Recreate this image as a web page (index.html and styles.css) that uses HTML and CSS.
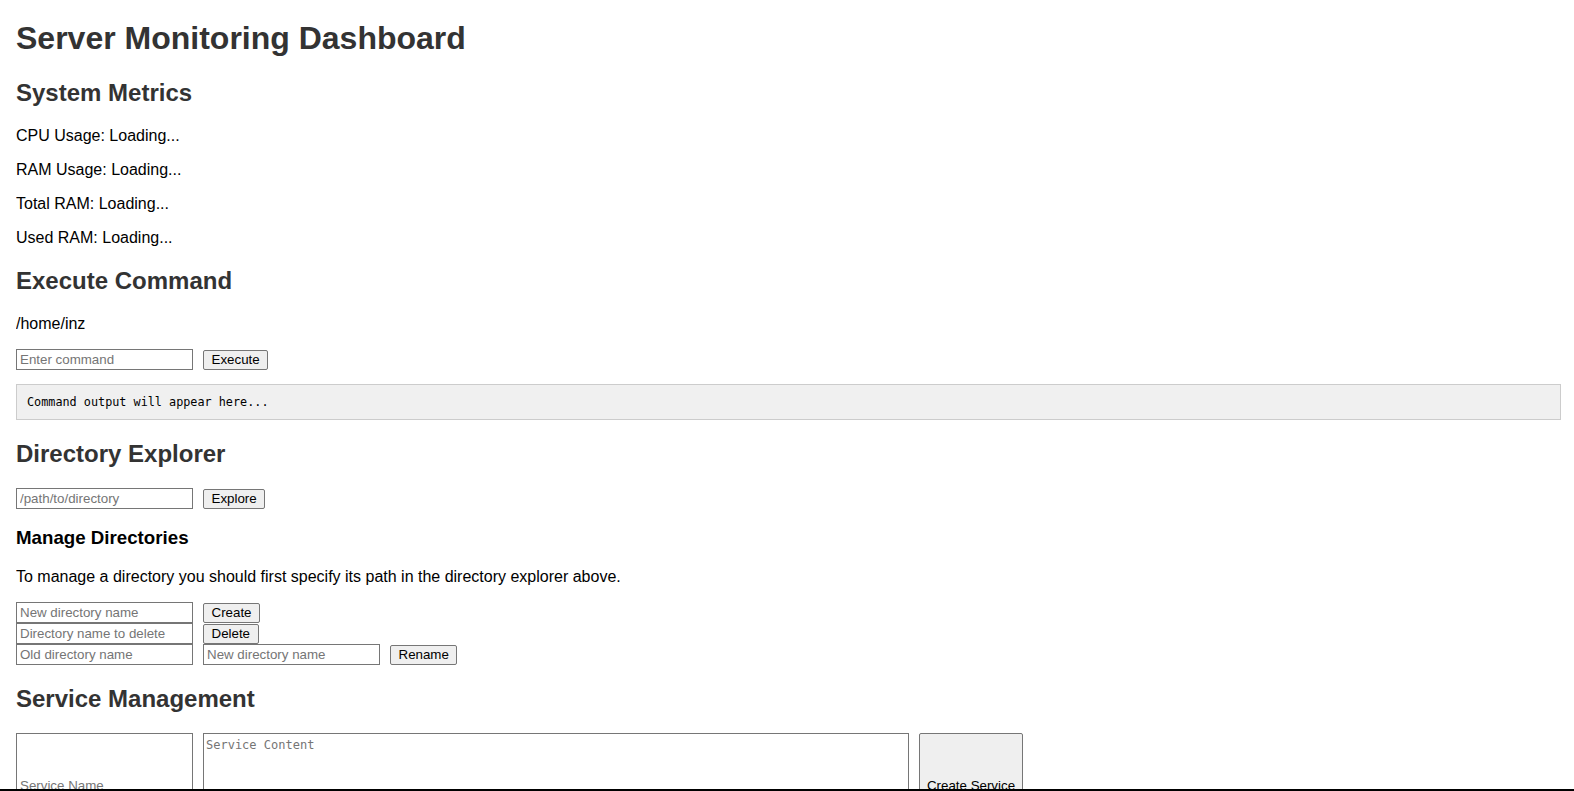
FILE: index.html
```html
<!DOCTYPE html>
<html lang="en">
<head>
<meta charset="utf-8">
<title>Server Monitoring Dashboard</title>
<link rel="stylesheet" href="styles.css">
</head>
<body>
<h1 class="title">Server Monitoring Dashboard</h1>

<section class="section">
  <h2 class="heading">System Metrics</h2>
  <p class="text">CPU Usage: Loading...</p>
  <p class="text">RAM Usage: Loading...</p>
  <p class="text">Total RAM: Loading...</p>
  <p class="text">Used RAM: Loading...</p>
</section>

<section class="section">
  <h2 class="heading">Execute Command</h2>
  <p class="text">/home/inz</p>
  <div class="row">
    <input class="field" type="text" placeholder="Enter command">
    <button class="btn">Execute</button>
  </div>
  <pre class="output">Command output will appear here...</pre>
</section>

<section class="section">
  <h2 class="heading">Directory Explorer</h2>
  <div class="row">
    <input class="field" type="text" placeholder="/path/to/directory">
    <button class="btn">Explore</button>
  </div>
  <h3 class="subheading">Manage Directories</h3>
  <p class="text">To manage a directory you should first specify its path in the directory explorer above.</p>
  <div class="stack">
    <div class="row">
      <input class="field" type="text" placeholder="New directory name">
      <button class="btn">Create</button>
    </div>
    <div class="row">
      <input class="field" type="text" placeholder="Directory name to delete">
      <button class="btn">Delete</button>
    </div>
    <div class="row">
      <input class="field" type="text" placeholder="Old directory name">
      <input class="field" type="text" placeholder="New directory name">
      <button class="btn">Rename</button>
    </div>
  </div>
</section>

<section class="section">
  <h2 class="heading">Service Management</h2>
  <div class="row service-row">
    <input class="field tall" type="text" placeholder="Service Name">
    <textarea class="content" placeholder="Service Content"></textarea>
    <button class="btn tall-btn">Create Service</button>
  </div>
</section>

<div class="edge"></div>
</body>
</html>
```

FILE: styles.css
```css
html, body {
  background: #ffffff;
}

body {
  margin: 0 13px 0 16px;
  font-family: "Liberation Sans", Arial, sans-serif;
  font-size: 16px;
  color: #000000;
}

.title {
  font-size: 32px;
  font-weight: bold;
  color: #333333;
  margin: 20px 0 22px;
}

.heading {
  font-size: 24px;
  font-weight: bold;
  color: #333333;
  margin: 20px 0;
}

.subheading {
  font-size: 18.72px;
  font-weight: bold;
  color: #000000;
  margin: 18px 0 19px;
}

.text {
  margin: 16px 0;
}

.row {
  display: flex;
  align-items: center;
  gap: 10px;
}

.stack {
  display: flex;
  flex-direction: column;
}

.field {
  box-sizing: border-box;
  width: 177px;
  height: 21px;
  margin: 0;
  padding: 1px 3px;
  border: 1px solid #767676;
  border-radius: 0;
  font-family: "Liberation Sans", Arial, sans-serif;
  font-size: 13.33px;
  color: #000000;
  background: #ffffff;
}

.field::placeholder {
  color: #757575;
}

.btn {
  box-sizing: border-box;
  height: 20px;
  margin: 0;
  padding: 1px 7.5px;
  border: 1px solid #767676;
  border-radius: 2px;
  background: #efefef;
  font-family: "Liberation Sans", Arial, sans-serif;
  font-size: 13.33px;
  color: #000000;
}

.output {
  margin: 14px 0;
  padding: 10px;
  background: #f0f0f0;
  border: 1px solid #cccccc;
  font-family: "DejaVu Sans Mono", monospace;
  font-size: 11.8px;
  line-height: 14px;
  color: #000000;
}

.service-row {
  align-items: flex-start;
}

.tall {
  height: 104px;
}

.content {
  box-sizing: border-box;
  width: 706px;
  height: 104px;
  margin: 0;
  padding: 4px 2px 2px;
  border: 1px solid #767676;
  font-family: "DejaVu Sans Mono", monospace;
  font-size: 12px;
  resize: both;
}

.content::placeholder {
  color: #757575;
}

.tall-btn {
  width: 104px;
  height: 104px;
  padding: 1px 6px;
}

.edge {
  position: fixed;
  left: 0;
  right: 0;
  bottom: 0;
  height: 2px;
  background: #000000;
}
```
